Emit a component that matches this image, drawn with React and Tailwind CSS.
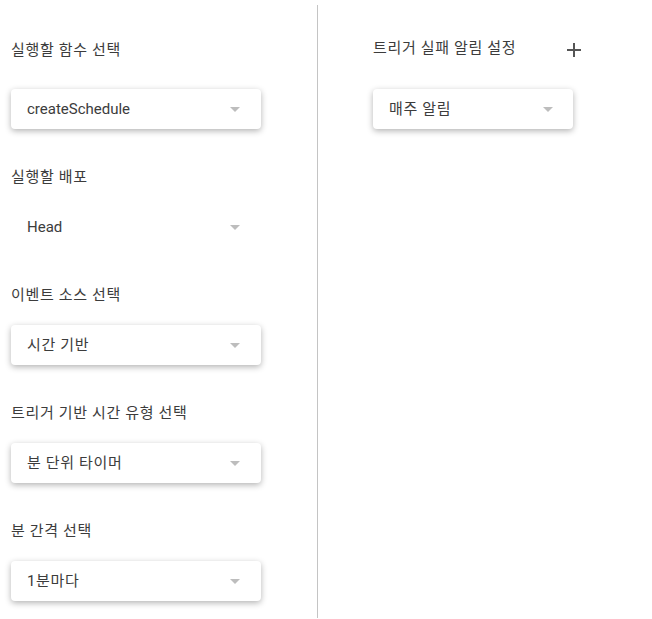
import React from "react";

const font = { fontFamily: 'Roboto, "Noto Sans CJK KR", sans-serif' };

function Arrow() {
  return (
    <span className="block w-0 h-0 border-l-[5px] border-r-[5px] border-t-[5px] border-l-transparent border-r-transparent border-t-[#bdbdbd]" />
  );
}

function Card({ text, ko = true, width = "w-[250px]", pr = "pr-[21px]" }) {
  return (
    <div
      className={`${width} h-[40px] rounded-[4px] bg-white shadow-[0_2px_6px_rgba(0,0,0,0.3)] flex items-center justify-between pl-[16px] ${pr}`}
    >
      <span className={`text-[15px] leading-[20px] text-[#3c3c3c] ${ko ? "tracking-[0.65px]" : ""}`}>{text}</span>
      <Arrow />
    </div>
  );
}

function Plain({ text }) {
  return (
    <div className="w-[250px] h-[40px] flex items-center justify-between pl-[16px] pr-[21px]">
      <span className="text-[15px] leading-[20px] text-[#3c3c3c]">{text}</span>
      <Arrow />
    </div>
  );
}

function Label({ children }) {
  return (
    <div className="text-[15px] leading-[20px] text-[#3c3c3c] tracking-[0.65px] h-[20px] whitespace-nowrap">
      {children}
    </div>
  );
}

export default function App() {
  return (
    <div className="flex pt-[5px] h-[619px] bg-white" style={font}>
      <div className="w-[317px] pl-[11px] pt-[35px] flex flex-col">
        <Label>실행할 함수 선택</Label>
        <div className="mt-[29px]">
          <Card text="createSchedule" ko={false} />
        </div>
        <div className="mt-[38px]">
          <Label>실행할 배포</Label>
        </div>
        <div className="mt-[20px]">
          <Plain text="Head" />
        </div>
        <div className="mt-[38px]">
          <Label>이벤트 소스 선택</Label>
        </div>
        <div className="mt-[20px]">
          <Card text="시간 기반" />
        </div>
        <div className="mt-[38px]">
          <Label>트리거 기반 시간 유형 선택</Label>
        </div>
        <div className="mt-[20px]">
          <Card text="분 단위 타이머" />
        </div>
        <div className="mt-[38px]">
          <Label>분 간격 선택</Label>
        </div>
        <div className="mt-[20px]">
          <Card text="1분마다" />
        </div>
      </div>
      <div className="h-[613px] border-l border-[#c4c4c4] pl-[55px] pt-[33px] flex flex-col">
        <div className="w-[208px] flex items-center justify-between">
          <Label>트리거 실패 알림 설정</Label>
          <svg width="14" height="14" viewBox="0 0 14 14" className="mt-[3px]">
            <path d="M7 0V14M0 7H14" stroke="#555" strokeWidth="2" />
          </svg>
        </div>
        <div className="mt-[31px]">
          <Card text="매주 알림" width="w-[200px]" pr="pr-[20px]" />
        </div>
      </div>
    </div>
  );
}
